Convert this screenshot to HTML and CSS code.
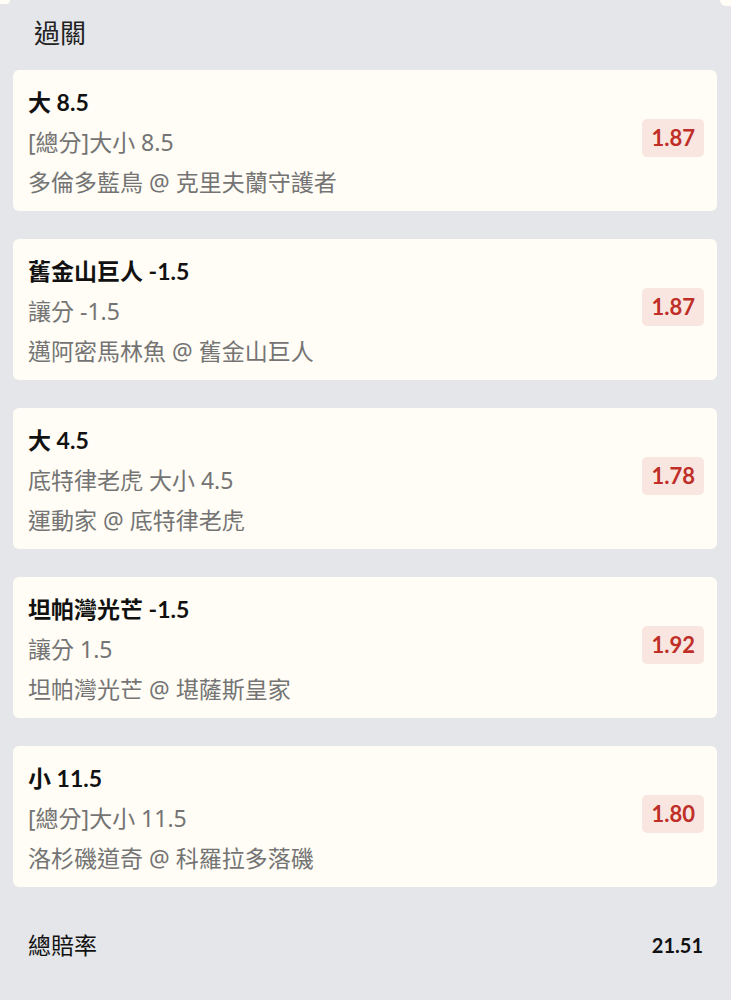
FILE: index.html
```html
<!DOCTYPE html>
<html lang="zh-Hant">
<head>
    <meta charset="UTF-8">
    <meta name="viewport" content="width=device-width, initial-scale=1.0">
    <title>過關</title>
    <link rel="stylesheet" href="styles.css">
</head>
<body>
    <div class="peek">
        <span class="peek-left"></span>
        <span class="peek-right"></span>
    </div>

    <h2 class="section-title">過關</h2>

    <ul class="bet-list">
        <li class="bet-card">
            <div class="bet-info">
                <div class="bet-pick">大 8.5</div>
                <div class="bet-market">[總分]大小 8.5</div>
                <div class="bet-match">多倫多藍鳥 @ 克里夫蘭守護者</div>
            </div>
            <span class="bet-odds">1.87</span>
        </li>
        <li class="bet-card">
            <div class="bet-info">
                <div class="bet-pick">舊金山巨人 -1.5</div>
                <div class="bet-market">讓分 -1.5</div>
                <div class="bet-match">邁阿密馬林魚 @ 舊金山巨人</div>
            </div>
            <span class="bet-odds">1.87</span>
        </li>
        <li class="bet-card">
            <div class="bet-info">
                <div class="bet-pick">大 4.5</div>
                <div class="bet-market">底特律老虎 大小 4.5</div>
                <div class="bet-match">運動家 @ 底特律老虎</div>
            </div>
            <span class="bet-odds">1.78</span>
        </li>
        <li class="bet-card">
            <div class="bet-info">
                <div class="bet-pick">坦帕灣光芒 -1.5</div>
                <div class="bet-market">讓分 1.5</div>
                <div class="bet-match">坦帕灣光芒 @ 堪薩斯皇家</div>
            </div>
            <span class="bet-odds">1.92</span>
        </li>
        <li class="bet-card">
            <div class="bet-info">
                <div class="bet-pick">小 11.5</div>
                <div class="bet-market">[總分]大小 11.5</div>
                <div class="bet-match">洛杉磯道奇 @ 科羅拉多落磯</div>
            </div>
            <span class="bet-odds">1.80</span>
        </li>
    </ul>

    <div class="total">
        <span class="total-label">總賠率</span>
        <span class="total-value">21.51</span>
    </div>
</body>
</html>
```

FILE: styles.css
```css
body {
    font-family: 'Lato', 'Noto Sans CJK TC', sans-serif;
    margin: 0;
    padding: 0;
    background-color: #e5e6e9;  /* light grey page */
    color: #111;
    height: 1000px;
    overflow: hidden;
}

/* bottoms of the cards above, cut off by the top edge */
.peek {
    display: flex;
    justify-content: space-between;
    height: 0;
}

.peek-left {
    width: 10px;
    height: 4px;
    background-color: #fffdf5;
    border-bottom-right-radius: 8px;
}

.peek-right {
    width: 11px;
    height: 6px;
    background-color: #fffdf5;
    border-bottom-left-radius: 8px;
}

.section-title {
    margin: 13px 0 17px 34px;
    font-size: 26px;
    font-weight: normal;
    line-height: 40px;
    color: #222;
}

.bet-list {
    list-style: none;
    margin: 0 14px 0 13px;
    padding: 0;
    display: flex;
    flex-direction: column;
    gap: 28px;
}

.bet-card {
    display: flex;
    align-items: center;
    justify-content: space-between;
    padding: 12px 13px 9px 15px;
    background-color: #fffdf5;  /* cream card */
    border-radius: 6px;
}

.bet-info {
    font-size: 23px;
    line-height: 40px;
}

.bet-pick {
    font-weight: bold;
    color: #111;
}

.bet-market,
.bet-match {
    font-family: 'Noto Sans', 'Noto Sans CJK TC', sans-serif;
    color: #747474;
}

.bet-odds {
    padding: 0 9px;
    line-height: 38px;
    font-size: 22px;
    font-weight: bold;
    color: #bf2f28;  /* odds red */
    background-color: #f9e6e0;
    border-radius: 5px;
    margin-bottom: 8px;
}

.total {
    display: flex;
    justify-content: space-between;
    align-items: center;
    margin-top: 38px;
    padding: 0 28px;
    line-height: 40px;
}

.total-label {
    font-size: 23px;
}

.total-value {
    font-size: 20px;
    font-weight: bold;
}
```
